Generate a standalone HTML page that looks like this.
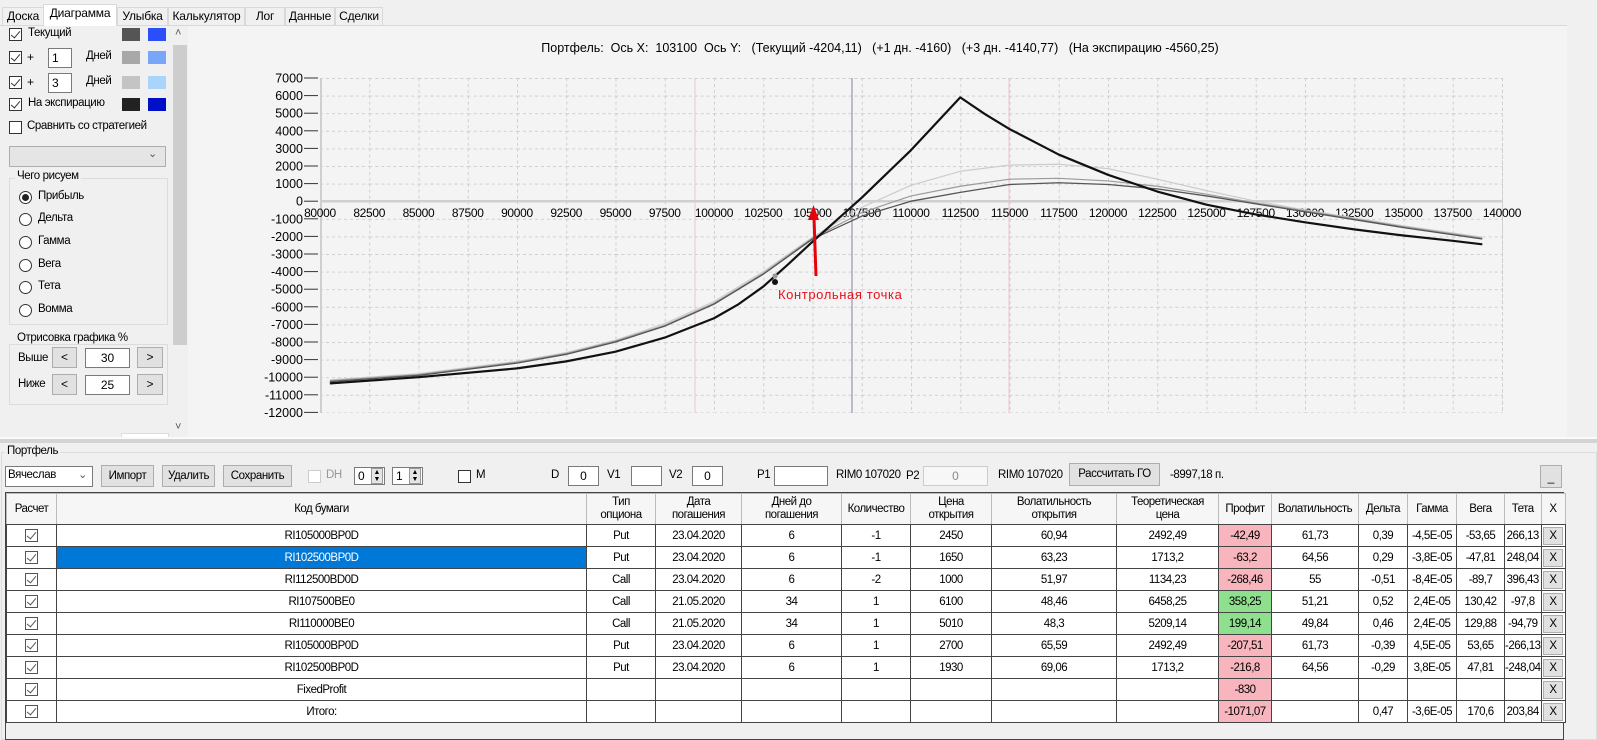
<!DOCTYPE html>
<html><head><meta charset="utf-8"><style>
*{box-sizing:border-box;margin:0;padding:0}
body{width:1597px;height:740px;overflow:hidden;background:#f0f0f0;font-family:"Liberation Sans",sans-serif;font-size:12px;color:#000;position:relative}
.a{position:absolute;white-space:nowrap}
.t{letter-spacing:-0.4px;font-size:11.5px}
.cb{position:absolute;width:13px;height:13px;border:1px solid #333;background:#fff}
.cb.c::after{content:"";position:absolute;left:3px;top:0px;width:4px;height:8px;border:solid #333;border-width:0 1.3px 1.3px 0;transform:rotate(40deg)}
.sw{position:absolute;width:18px;height:13px}
.in{position:absolute;background:#fff;border:1px solid #7a7a7a;padding-left:3px;line-height:18px}
.btn{position:absolute;background:#e1e1e1;border:1px solid #adadad;text-align:center}
.rd{position:absolute;width:13px;height:13px;border:1px solid #333;border-radius:50%;background:#fff}
.grp{position:absolute;border:1px solid #dcdcdc}
.tab{position:absolute;top:7px;height:18px;border:1px solid #d9d9d9;border-bottom:none;background:#f0f0f0;text-align:center;line-height:17px;font-size:12px;letter-spacing:-0.2px}
table{position:absolute;left:6px;top:493px;border-collapse:collapse;table-layout:fixed;font-size:11.5px;letter-spacing:-0.5px}
td{border:1px solid #444;height:22px;text-align:center;background:#fff;padding:0;overflow:hidden;white-space:nowrap}
th{border:1px solid #bbb;border-bottom:1px solid #444;height:31px;font-weight:normal;background:#f6f6f6;line-height:13px;padding:0;overflow:hidden}
.r{background:#f8b5bd}.g{background:#8ee08e}
.x{display:inline-block;width:20px;height:18px;background:#e1e1e1;border:1px solid #adadad;line-height:16px}
.ck{display:inline-block;width:13px;height:13px;border:1px solid #555;position:relative;vertical-align:middle;background:#fff}
.ck::after{content:"";position:absolute;left:3px;top:0;width:4px;height:8px;border:solid #555;border-width:0 1.2px 1.2px 0;transform:rotate(40deg)}
</style></head><body>
<div class="a" style="left:0;top:0;width:1597px;height:7px;background:#f0f0f0"></div>
<div class="tab" style="left:2px;width:42px">Доска</div>
<div class="tab" style="left:43px;top:4px;height:22px;width:74px;background:#fff;z-index:2">Диаграмма</div>
<div class="tab" style="left:117px;width:51px">Улыбка</div>
<div class="tab" style="left:168px;width:77px">Калькулятор</div>
<div class="tab" style="left:245px;width:40px">Лог</div>
<div class="tab" style="left:285px;width:50px">Данные</div>
<div class="tab" style="left:335px;width:48px">Сделки</div>
<div class="a" style="left:0;top:25px;width:1567px;height:1px;background:#d9d9d9"></div>
<div class="a" style="left:188px;top:26px;width:1379px;height:411px;background:#f4f4f4"></div>

<svg class="a" style="left:188px;top:26px" width="1379" height="411">
<defs><pattern id="gp" patternUnits="userSpaceOnUse" x="320" y="78" width="49.25" height="17.6">
<line x1="0.5" y1="0" x2="0.5" y2="17.6" stroke="#cfcfcf" stroke-dasharray="3,3"/>
<line x1="0" y1="0.5" x2="49.25" y2="0.5" stroke="#cfcfcf" stroke-dasharray="3,3"/></pattern></defs>
<g transform="translate(-188,-26)" font-family="Liberation Sans" font-size="12.5">
<text x="880" y="52" text-anchor="middle" font-size="12.5" xml:space="preserve">Портфель:  Ось X:  103100  Ось Y:   (Текущий -4204,11)   (+1 дн. -4160)   (+3 дн. -4140,77)   (На экспирацию -4560,25)</text>
<rect x="320" y="78" width="1183" height="335" fill="url(#gp)"/>
<line x1="1502.5" y1="78" x2="1502.5" y2="413" stroke="#cfcfcf" stroke-dasharray="3,3"/>
<line x1="321" y1="78" x2="321" y2="413" stroke="#cfcfcf" stroke-width="2"/>
<line x1="695" y1="78" x2="695" y2="413" stroke="#f2c4cb"/>
<line x1="1009" y1="78" x2="1009" y2="413" stroke="#f2c4cb"/>
<line x1="852" y1="78" x2="852" y2="413" stroke="#9aa0b4" stroke-width="1.3"/>
<line x1="320" y1="201.2" x2="1503" y2="201.2" stroke="#cfcfcf" stroke-width="2.5"/>
<g stroke="#333"><line x1="304" y1="78" x2="318" y2="78"/><line x1="304" y1="95.6" x2="318" y2="95.6"/><line x1="304" y1="113.2" x2="318" y2="113.2"/><line x1="304" y1="130.8" x2="318" y2="130.8"/><line x1="304" y1="148.4" x2="318" y2="148.4"/><line x1="304" y1="166" x2="318" y2="166"/><line x1="304" y1="183.6" x2="318" y2="183.6"/><line x1="304" y1="201.2" x2="318" y2="201.2"/><line x1="304" y1="218.8" x2="318" y2="218.8"/><line x1="304" y1="236.4" x2="318" y2="236.4"/><line x1="304" y1="254" x2="318" y2="254"/><line x1="304" y1="271.6" x2="318" y2="271.6"/><line x1="304" y1="289.2" x2="318" y2="289.2"/><line x1="304" y1="306.8" x2="318" y2="306.8"/><line x1="304" y1="324.4" x2="318" y2="324.4"/><line x1="304" y1="342" x2="318" y2="342"/><line x1="304" y1="359.6" x2="318" y2="359.6"/><line x1="304" y1="377.2" x2="318" y2="377.2"/><line x1="304" y1="394.8" x2="318" y2="394.8"/><line x1="304" y1="412.4" x2="318" y2="412.4"/></g>
<g text-anchor="end"><text x="303" y="82.5">7000</text><text x="303" y="100">6000</text><text x="303" y="117.7">5000</text><text x="303" y="135.3">4000</text><text x="303" y="152.9">3000</text><text x="303" y="170.5">2000</text><text x="303" y="188">1000</text><text x="303" y="205.7">0</text><text x="303" y="223.3">-1000</text><text x="303" y="240.9">-2000</text><text x="303" y="258.5">-3000</text><text x="303" y="276">-4000</text><text x="303" y="293.7">-5000</text><text x="303" y="311.3">-6000</text><text x="303" y="328.9">-7000</text><text x="303" y="346.5">-8000</text><text x="303" y="364">-9000</text><text x="303" y="381.7">-10000</text><text x="303" y="399.3">-11000</text><text x="303" y="416.9">-12000</text></g>
<g text-anchor="middle" font-size="12" letter-spacing="-0.3"><text x="320" y="217">80000</text><text x="369.25" y="217">82500</text><text x="418.5" y="217">85000</text><text x="467.75" y="217">87500</text><text x="517" y="217">90000</text><text x="566.25" y="217">92500</text><text x="615.5" y="217">95000</text><text x="664.75" y="217">97500</text><text x="714" y="217">100000</text><text x="763.25" y="217">102500</text><text x="812.5" y="217">105000</text><text x="861.75" y="217">107500</text><text x="911" y="217">110000</text><text x="960.25" y="217">112500</text><text x="1009.5" y="217">115000</text><text x="1058.75" y="217">117500</text><text x="1108" y="217">120000</text><text x="1157.25" y="217">122500</text><text x="1206.5" y="217">125000</text><text x="1255.75" y="217">127500</text><text x="1305" y="217">130000</text><text x="1354.25" y="217">132500</text><text x="1403.5" y="217">135000</text><text x="1452.75" y="217">137500</text><text x="1502" y="217">140000</text></g>
<g transform="matrix(0.0197 0 0 -0.0176 320 201.2)" fill="none" stroke-linejoin="round">
<polyline vector-effect="non-scaling-stroke" stroke="#cccccc" stroke-width="1.2" points="500,-10150 5000,-9800 10000,-9100 12500,-8600 15000,-7900 17500,-6950 20000,-5700 22500,-4000 25000,-2050 27500,-350 30000,900 32500,1700 35000,2050 37500,2100 40000,1850 42500,1250 45000,600 47500,0 50000,-500 55000,-1400 59000,-2050"/>
<polyline vector-effect="non-scaling-stroke" stroke="#9a9a9a" stroke-width="1.2" points="500,-10200 5000,-9850 10000,-9150 12500,-8650 15000,-7950 17500,-7050 20000,-5800 22500,-4100 25000,-2100 27500,-650 30000,300 32500,850 35000,1250 37500,1300 40000,1150 42500,850 45000,400 47500,-100 50000,-550 55000,-1450 59000,-2100"/>
<polyline vector-effect="non-scaling-stroke" stroke="#555" stroke-width="1.3" points="500,-10250 5000,-9900 10000,-9200 12500,-8700 15000,-8000 17500,-7100 20000,-5850 22500,-4150 25000,-2150 27500,-850 30000,0 32500,500 35000,950 37500,1050 40000,950 42500,700 45000,300 47500,-150 50000,-600 55000,-1500 59000,-2150"/>
<polyline vector-effect="non-scaling-stroke" stroke="#111" stroke-width="2.2" points="500,-10350 5000,-10000 10000,-9500 12500,-9100 15000,-8550 17500,-7750 20000,-6650 21250,-5850 22500,-4850 23750,-3600 25000,-2300 27500,200 30000,2900 32500,5900 33750,4950 35000,4100 37500,2650 40000,1500 42500,550 45000,-200 47500,-750 50000,-1200 52500,-1600 55000,-1950 57500,-2250 59000,-2450"/>
</g>
<circle cx="775" cy="276" r="2.6" fill="#999"/><circle cx="775" cy="282" r="3" fill="#111"/>
<line x1="816" y1="276" x2="814" y2="218" stroke="#e8000b" stroke-width="3"/>
<polygon points="808,220 813.5,205 819,220" fill="#e8000b"/>
<text x="778" y="299" fill="#e8101b" font-size="13" letter-spacing="0.6">Контрольная точка</text>
</g></svg>

<!-- left panel -->
<div class="a" style="left:0;top:26px;width:172px;height:411px;background:#f0f0f0"></div>
<div class="cb c" style="left:9px;top:28px"></div><div class="a t" style="left:28px;top:27px">Текущий</div>
<div class="sw" style="left:122px;top:28px;background:#555"></div><div class="sw" style="left:148px;top:28px;background:#2a4ff8"></div>
<div class="cb c" style="left:9px;top:51px"></div><div class="a" style="left:27px;top:50px">+</div>
<div class="in" style="left:48px;top:48px;width:24px;height:20px">1</div><div class="a t" style="left:86px;top:50px">Дней</div>
<div class="sw" style="left:122px;top:51px;background:#a8a8a8"></div><div class="sw" style="left:148px;top:51px;background:#78a6f8"></div>
<div class="cb c" style="left:9px;top:76px"></div><div class="a" style="left:27px;top:75px">+</div>
<div class="in" style="left:48px;top:73px;width:24px;height:20px">3</div><div class="a t" style="left:86px;top:75px">Дней</div>
<div class="sw" style="left:122px;top:76px;background:#c4c4c4"></div><div class="sw" style="left:148px;top:76px;background:#aad4fc"></div>
<div class="cb c" style="left:9px;top:98px"></div><div class="a t" style="left:28px;top:97px">На экспирацию</div>
<div class="sw" style="left:122px;top:98px;background:#222"></div><div class="sw" style="left:148px;top:98px;background:#0010c8"></div>
<div class="cb" style="left:9px;top:121px"></div><div class="a t" style="left:27px;top:120px">Сравнить со стратегией</div>
<div class="a" style="left:9px;top:146px;width:157px;height:21px;background:#e5e5e5;border:1px solid #adadad"></div>
<div class="a" style="left:148px;top:147px;font-size:11px;color:#555">&#8964;</div>
<div class="grp" style="left:9px;top:178px;width:159px;height:147px"></div>
<div class="a t" style="left:15px;top:170px;background:#f0f0f0;padding:0 2px">Чего рисуем</div>
<div class="rd" style="left:19px;top:191px"><div style="position:absolute;left:2px;top:2px;width:7px;height:7px;border-radius:50%;background:#222"></div></div><div class="a t" style="left:38px;top:190px">Прибыль</div>
<div class="rd" style="left:19px;top:213px"></div><div class="a t" style="left:38px;top:212px">Дельта</div>
<div class="rd" style="left:19px;top:236px"></div><div class="a t" style="left:38px;top:235px">Гамма</div>
<div class="rd" style="left:19px;top:259px"></div><div class="a t" style="left:38px;top:258px">Вега</div>
<div class="rd" style="left:19px;top:281px"></div><div class="a t" style="left:38px;top:280px">Тета</div>
<div class="rd" style="left:19px;top:304px"></div><div class="a t" style="left:38px;top:303px">Вомма</div>
<div class="grp" style="left:9px;top:344px;width:159px;height:61px"></div>
<div class="a t" style="left:15px;top:332px;background:#f0f0f0;padding:0 2px">Отрисовка графика %</div>
<div class="a t" style="left:18px;top:352px">Выше</div>
<div class="btn" style="left:52px;top:347px;width:25px;height:21px;line-height:19px">&lt;</div>
<div class="in" style="left:85px;top:348px;width:45px;height:20px;text-align:center;padding:0">30</div>
<div class="btn" style="left:137px;top:347px;width:26px;height:21px;line-height:19px">&gt;</div>
<div class="a t" style="left:18px;top:378px">Ниже</div>
<div class="btn" style="left:52px;top:374px;width:25px;height:21px;line-height:19px">&lt;</div>
<div class="in" style="left:85px;top:375px;width:45px;height:20px;text-align:center;padding:0">25</div>
<div class="btn" style="left:137px;top:374px;width:26px;height:21px;line-height:19px">&gt;</div>
<div class="a" style="left:121px;top:433px;width:48px;height:5px;background:#fff;border:1px solid #ddd;border-bottom:none"></div>
<div class="a" style="left:172px;top:26px;width:16px;height:411px;background:#f0f0f0"></div>
<div class="a" style="left:173px;top:45px;width:14px;height:300px;background:#cdcdcd"></div>
<div class="a" style="left:175px;top:27px;font-size:11px;color:#555">&#708;</div>
<div class="a" style="left:175px;top:421px;font-size:11px;color:#555">&#709;</div>

<!-- splitter -->
<div class="a" style="left:0;top:437px;width:1597px;height:2px;background:#fafafa"></div>
<div class="a" style="left:0;top:439px;width:1597px;height:4px;background:#d4d4d4"></div>
<div class="grp" style="left:1px;top:452px;width:1596px;height:288px;border-color:#dcdcdc"></div>
<div class="a t" style="left:5px;top:445px;background:#f0f0f0;padding:0 2px">Портфель</div>

<!-- toolbar -->
<div class="a t" style="left:5px;top:466px;width:88px;height:21px;background:#fff;border:1px solid #7a7a7a;padding:2px 2px">Вячеслав<span style="position:absolute;right:5px;top:1px;color:#555;font-size:11px">&#8964;</span></div>
<div class="btn t" style="left:101px;top:465px;width:53px;height:22px;line-height:20px">Импорт</div>
<div class="btn t" style="left:162px;top:465px;width:53px;height:22px;line-height:20px">Удалить</div>
<div class="btn t" style="left:223px;top:465px;width:69px;height:22px;line-height:20px">Сохранить</div>
<div class="cb" style="left:308px;top:470px;border-color:#ccc"></div><div class="a t" style="left:326px;top:469px;color:#999">DH</div>
<div class="in" style="left:354px;top:467px;width:31px;height:18px;line-height:16px">0</div><div class="a" style="left:371px;top:468px;width:12px;height:16px;background:#e5e5e5;border:1px solid #999;font-size:7px;line-height:7px;text-align:center">▲<br>▼</div>
<div class="in" style="left:392px;top:467px;width:31px;height:18px;line-height:16px">1</div><div class="a" style="left:409px;top:468px;width:12px;height:16px;background:#e5e5e5;border:1px solid #999;font-size:7px;line-height:7px;text-align:center">▲<br>▼</div>
<div class="cb" style="left:458px;top:470px"></div><div class="a t" style="left:476px;top:469px">M</div>
<div class="a t" style="left:551px;top:469px">D</div><div class="in" style="left:568px;top:466px;width:31px;height:20px;text-align:center;padding:0">0</div>
<div class="a t" style="left:607px;top:469px">V1</div><div class="in" style="left:631px;top:466px;width:31px;height:20px"></div>
<div class="a t" style="left:669px;top:469px">V2</div><div class="in" style="left:692px;top:466px;width:31px;height:20px;text-align:center;padding:0">0</div>
<div class="a t" style="left:757px;top:469px">P1</div><div class="in" style="left:774px;top:466px;width:54px;height:20px"></div>
<div class="a t" style="left:836px;top:469px">RIM0 107020</div><div class="a t" style="left:906px;top:470px">P2</div>
<div class="in" style="left:923px;top:466px;width:65px;height:20px;text-align:center;padding:0;border-color:#ccc;color:#888;background:#f7f7f7">0</div>
<div class="a t" style="left:998px;top:469px">RIM0 107020</div>
<div class="btn t" style="left:1069px;top:463px;width:91px;height:23px;line-height:21px">Рассчитать ГО</div>
<div class="a t" style="left:1170px;top:469px">-8997,18 п.</div>
<div class="btn" style="left:1540px;top:465px;width:22px;height:23px;line-height:22px">_</div>

<div class="a" style="left:5px;top:492px;width:1559px;height:248px;border:1px solid #444;background:#f0f0f0"></div>
<table>
<colgroup><col style="width:50px"><col style="width:530px"><col style="width:69px"><col style="width:86px"><col style="width:100px"><col style="width:69px"><col style="width:81px"><col style="width:125px"><col style="width:102px"><col style="width:53px"><col style="width:87px"><col style="width:49px"><col style="width:49px"><col style="width:48px"><col style="width:35px"><col style="width:24px"></colgroup>
<tr><th>Расчет</th><th>Код бумаги</th><th>Тип<br>опциона</th><th>Дата<br>погашения</th><th>Дней до<br>погашения</th><th>Количество</th><th>Цена<br>открытия</th><th>Волатильность<br>открытия</th><th>Теоретическая<br>цена</th><th>Профит</th><th>Волатильность</th><th>Дельта</th><th>Гамма</th><th>Вега</th><th>Тета</th><th>X</th></tr>
<tr><td><span class="ck"></span></td><td>RI105000BP0D</td><td>Put</td><td>23.04.2020</td><td>6</td><td>-1</td><td>2450</td><td>60,94</td><td>2492,49</td><td class="r">-42,49</td><td>61,73</td><td>0,39</td><td>-4,5E-05</td><td>-53,65</td><td>266,13</td><td><span class="x">X</span></td></tr>
<tr><td><span class="ck"></span></td><td style="background:#0078d7;color:#fff">RI102500BP0D</td><td>Put</td><td>23.04.2020</td><td>6</td><td>-1</td><td>1650</td><td>63,23</td><td>1713,2</td><td class="r">-63,2</td><td>64,56</td><td>0,29</td><td>-3,8E-05</td><td>-47,81</td><td>248,04</td><td><span class="x">X</span></td></tr>
<tr><td><span class="ck"></span></td><td>RI112500BD0D</td><td>Call</td><td>23.04.2020</td><td>6</td><td>-2</td><td>1000</td><td>51,97</td><td>1134,23</td><td class="r">-268,46</td><td>55</td><td>-0,51</td><td>-8,4E-05</td><td>-89,7</td><td>396,43</td><td><span class="x">X</span></td></tr>
<tr><td><span class="ck"></span></td><td>RI107500BE0</td><td>Call</td><td>21.05.2020</td><td>34</td><td>1</td><td>6100</td><td>48,46</td><td>6458,25</td><td class="g">358,25</td><td>51,21</td><td>0,52</td><td>2,4E-05</td><td>130,42</td><td>-97,8</td><td><span class="x">X</span></td></tr>
<tr><td><span class="ck"></span></td><td>RI110000BE0</td><td>Call</td><td>21.05.2020</td><td>34</td><td>1</td><td>5010</td><td>48,3</td><td>5209,14</td><td class="g">199,14</td><td>49,84</td><td>0,46</td><td>2,4E-05</td><td>129,88</td><td>-94,79</td><td><span class="x">X</span></td></tr>
<tr><td><span class="ck"></span></td><td>RI105000BP0D</td><td>Put</td><td>23.04.2020</td><td>6</td><td>1</td><td>2700</td><td>65,59</td><td>2492,49</td><td class="r">-207,51</td><td>61,73</td><td>-0,39</td><td>4,5E-05</td><td>53,65</td><td>-266,13</td><td><span class="x">X</span></td></tr>
<tr><td><span class="ck"></span></td><td>RI102500BP0D</td><td>Put</td><td>23.04.2020</td><td>6</td><td>1</td><td>1930</td><td>69,06</td><td>1713,2</td><td class="r">-216,8</td><td>64,56</td><td>-0,29</td><td>3,8E-05</td><td>47,81</td><td>-248,04</td><td><span class="x">X</span></td></tr>
<tr><td><span class="ck"></span></td><td>FixedProfit</td><td></td><td></td><td></td><td></td><td></td><td></td><td></td><td class="r">-830</td><td></td><td></td><td></td><td></td><td></td><td><span class="x">X</span></td></tr>
<tr><td><span class="ck"></span></td><td>Итого:</td><td></td><td></td><td></td><td></td><td></td><td></td><td></td><td class="r">-1071,07</td><td></td><td>0,47</td><td>-3,6E-05</td><td>170,6</td><td>203,84</td><td><span class="x">X</span></td></tr>
</table>
</body></html>
